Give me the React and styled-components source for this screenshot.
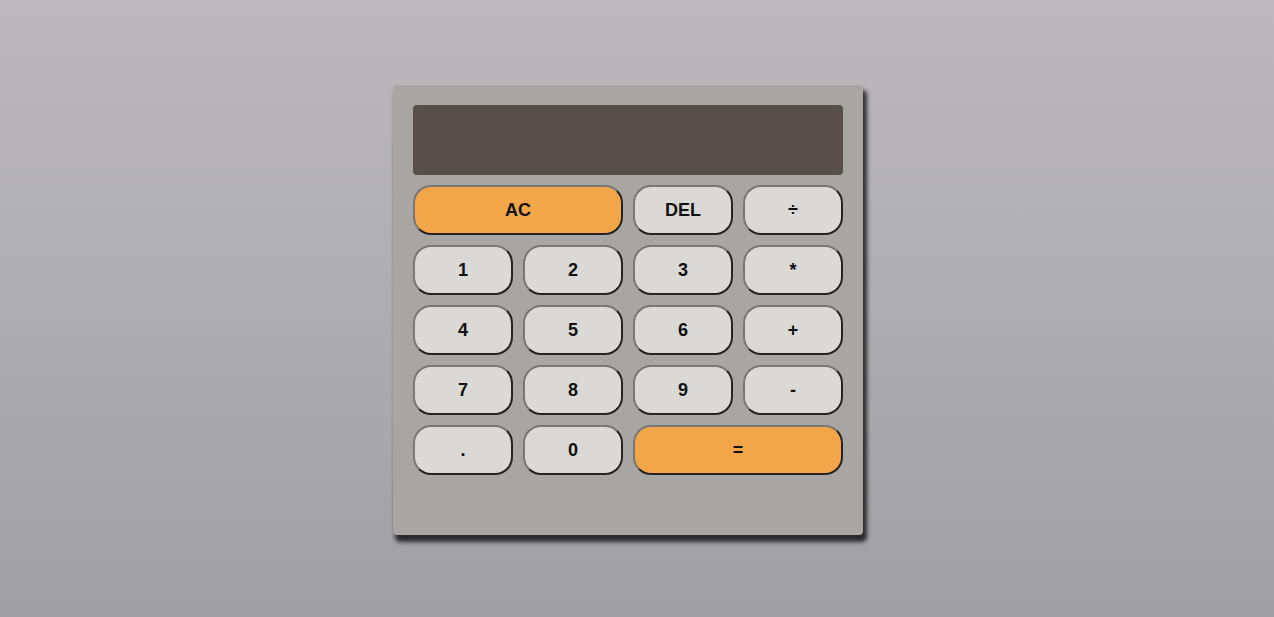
import React from 'react';
import styled, { createGlobalStyle } from 'styled-components';

const GlobalStyle = createGlobalStyle`
  * { box-sizing: border-box; }
  html, body { margin: 0; padding: 0; }
  body {
    min-height: 100vh;
    background: linear-gradient(to bottom, #bbb9bc, #a0a0a4);
    font-family: "Liberation Sans", Arial, sans-serif;
  }
`;

const Page = styled.div`
  display: flex;
  justify-content: center;
  padding: 85px 18px 0 0;
`;

const Calculator = styled.div`
  width: 470px;
  height: 450px;
  padding: 20px;
  background: #a7a6a2;
  border-radius: 4px;
  box-shadow: 3px 6px 4px 1px rgba(0, 0, 0, 0.75);
  display: grid;
  grid-template-columns: repeat(4, 100px);
  grid-template-rows: 70px repeat(5, 50px);
  gap: 10px;
  align-content: start;
`;

const Display = styled.div`
  grid-column: 1 / -1;
  background: #584f4d;
  border-radius: 4px;
`;

const Key = styled.button`
  grid-column: span ${(p) => p.$span || 1};
  border: 2px solid;
  border-color: #7a7876 #262422 #262422 #7a7876;
  border-radius: 18px;
  background: ${(p) => (p.$accent ? '#f3a549' : '#dad9d5')};
  color: #111;
  font-family: "Liberation Sans", Arial, sans-serif;
  font-weight: bold;
  font-size: 18px;
  cursor: pointer;
  padding: 0;
`;

const keys = [
  { label: 'AC', span: 2, accent: true },
  { label: 'DEL' },
  { label: '÷' },
  { label: '1' },
  { label: '2' },
  { label: '3' },
  { label: '*' },
  { label: '4' },
  { label: '5' },
  { label: '6' },
  { label: '+' },
  { label: '7' },
  { label: '8' },
  { label: '9' },
  { label: '-' },
  { label: '.' },
  { label: '0' },
  { label: '=', span: 2, accent: true },
];

export default function App() {
  return (
    <>
      <GlobalStyle />
      <Page>
        <Calculator>
          <Display />
          {keys.map((k) => (
            <Key key={k.label} $span={k.span} $accent={k.accent}>
              {k.label}
            </Key>
          ))}
        </Calculator>
      </Page>
    </>
  );
}
